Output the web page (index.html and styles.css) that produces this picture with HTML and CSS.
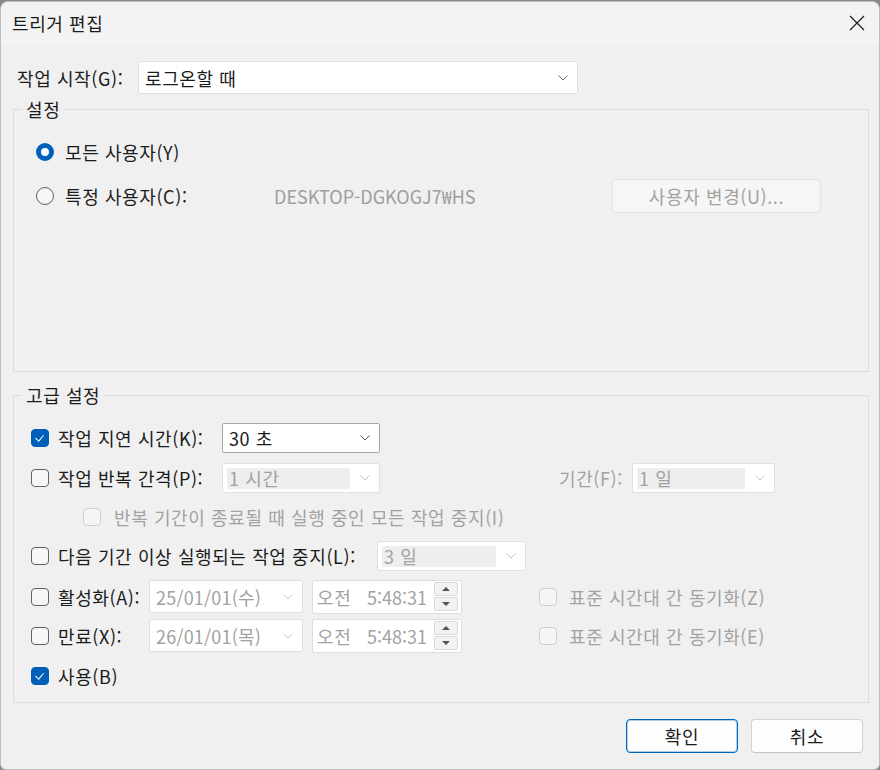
FILE: index.html
```html
<!DOCTYPE html>
<html lang="ko">
<head>
  <meta charset="UTF-8" />
  <title>트리거 편집</title>
  <link rel="stylesheet" href="styles.css">
</head>
<body>

<div class="window">
  <div class="titlebar">
    <span class="title">트리거 편집</span>
    <span class="close">
      <svg width="16" height="16" viewBox="0 0 16 16"><path d="M1 1 L15 15 M15 1 L1 15" stroke="#1b1b1b" stroke-width="1.2" fill="none"/></svg>
    </span>
  </div>

  <div class="content">
    <div class="start-row">
      <span class="start-label">작업 시작(G):</span>
      <div class="combo combo-start">
        <span class="combo-text">로그온할 때</span>
        <svg class="chev" width="10" height="6" viewBox="0 0 10 6"><path d="M0.5 0.5 L5 5 L9.5 0.5" stroke="#666" fill="none"/></svg>
      </div>
    </div>

    <fieldset class="group group-settings">
      <legend>설정</legend>
      <div class="group-body settings-body">
        <div class="radio-row row-all">
          <span class="radio checked"></span>
          <span class="radio-label">모든 사용자(Y)</span>
        </div>
        <div class="radio-row row-user">
          <span class="radio"></span>
          <span class="radio-label user-label">특정 사용자(C):</span>
          <span class="user-name">DESKTOP-DGKOGJ7₩HS</span>
          <span class="btn btn-disabled btn-user">사용자 변경(U)...</span>
        </div>
      </div>
    </fieldset>

    <fieldset class="group group-advanced">
      <legend>고급 설정</legend>
      <div class="group-body advanced-body">
        <div class="row row-delay">
          <span class="check checked"></span>
          <span class="lbl lbl-mid">작업 지연 시간(K):</span>
          <div class="combo combo-active combo-mid">
            <span class="combo-text">30 초</span>
            <svg class="chev" width="10" height="6" viewBox="0 0 10 6"><path d="M0.5 0.5 L5 5 L9.5 0.5" stroke="#555" fill="none"/></svg>
          </div>
        </div>

        <div class="row row-repeat">
          <span class="check"></span>
          <span class="lbl lbl-mid">작업 반복 간격(P):</span>
          <div class="combo combo-off combo-mid">
            <span class="combo-sel">1 시간</span>
            <svg class="chev" width="10" height="6" viewBox="0 0 10 6"><path d="M0.5 0.5 L5 5 L9.5 0.5" stroke="#c4c4c4" fill="none"/></svg>
          </div>
          <span class="lbl lbl-off lbl-period">기간(F):</span>
          <div class="combo combo-off combo-period">
            <span class="combo-sel">1 일</span>
            <svg class="chev" width="10" height="6" viewBox="0 0 10 6"><path d="M0.5 0.5 L5 5 L9.5 0.5" stroke="#c4c4c4" fill="none"/></svg>
          </div>
        </div>

        <div class="row row-stop-all">
          <span class="check check-off"></span>
          <span class="lbl-off">반복 기간이 종료될 때 실행 중인 모든 작업 중지(I)</span>
        </div>

        <div class="row row-stop">
          <span class="check"></span>
          <span class="lbl lbl-long">다음 기간 이상 실행되는 작업 중지(L):</span>
          <div class="combo combo-off combo-stop">
            <span class="combo-sel">3 일</span>
            <svg class="chev" width="10" height="6" viewBox="0 0 10 6"><path d="M0.5 0.5 L5 5 L9.5 0.5" stroke="#c4c4c4" fill="none"/></svg>
          </div>
        </div>

        <div class="row row-date row-activate">
          <span class="check"></span>
          <span class="lbl lbl-short">활성화(A):</span>
          <div class="combo combo-date">
            <span class="combo-text">25/01/01(수)</span>
            <svg class="chev" width="10" height="6" viewBox="0 0 10 6"><path d="M0.5 0.5 L5 5 L9.5 0.5" stroke="#c4c4c4" fill="none"/></svg>
          </div>
          <div class="timebox">
            <span class="time-ampm">오전</span>
            <span class="time-value">5:48:31</span>
            <span class="spin">
              <span class="spin-btn"><span class="tri-up"></span></span>
              <span class="spin-btn"><span class="tri-down"></span></span>
            </span>
          </div>
          <span class="check check-off sync-check"></span>
          <span class="lbl-off">표준 시간대 간 동기화(Z)</span>
        </div>

        <div class="row row-date row-expire">
          <span class="check"></span>
          <span class="lbl lbl-short">만료(X):</span>
          <div class="combo combo-date">
            <span class="combo-text">26/01/01(목)</span>
            <svg class="chev" width="10" height="6" viewBox="0 0 10 6"><path d="M0.5 0.5 L5 5 L9.5 0.5" stroke="#c4c4c4" fill="none"/></svg>
          </div>
          <div class="timebox">
            <span class="time-ampm">오전</span>
            <span class="time-value">5:48:31</span>
            <span class="spin">
              <span class="spin-btn"><span class="tri-up"></span></span>
              <span class="spin-btn"><span class="tri-down"></span></span>
            </span>
          </div>
          <span class="check check-off sync-check"></span>
          <span class="lbl-off">표준 시간대 간 동기화(E)</span>
        </div>

        <div class="row row-enabled">
          <span class="check checked"></span>
          <span class="lbl">사용(B)</span>
        </div>
      </div>
    </fieldset>

    <div class="actions">
      <button class="btn btn-default">확인</button>
      <button class="btn">취소</button>
    </div>
  </div>
</div>

</body>
</html>
```

FILE: styles.css
```css
html, body {
  margin: 0;
  height: 100%;
}
body {
  font-family: "Noto Sans CJK KR", "Noto Sans", sans-serif;
  font-size: 18px;
  letter-spacing: 0.6px;
  color: #1b1b1b;
  background: #8a8a8a;
}
.window {
  box-sizing: border-box;
  margin-top: 1px;
  height: 769px;
  background: #f0f0f0;
  border: 1px solid #bdbdbd;
  border-radius: 8px 8px 6px 6px;
  overflow: hidden;
}
.titlebar {
  height: 42px;
  background: #f3f3f3;
  display: flex;
  align-items: center;
  justify-content: space-between;
  padding: 0 13px 0 11px;
}
.title {
  font-size: 18px;
  line-height: 20px;
}
.close {
  display: flex;
  width: 16px;
  height: 16px;
  margin-right: 1px;
}
.content {
  padding: 0 10px 0 12px;
}

/* top row */
.start-row {
  display: flex;
  align-items: center;
  margin-top: 17px;
  padding-left: 4px;
}
.start-label {
  width: 121px;
}
.combo {
  box-sizing: border-box;
  display: flex;
  align-items: center;
  justify-content: space-between;
  background: #fff;
  border: 1px solid #e0e0e0;
  border-radius: 2px;
  padding: 0 9px 0 6px;
}
.combo-start {
  width: 440px;
  height: 33px;
}
.combo-text {
  line-height: 20px;
}
.chev {
  flex: none;
}

/* group boxes */
.group {
  box-sizing: border-box;
  margin: 0;
  padding: 0;
  border: 1px solid #dcdcdc;
  min-width: 0;
}
.group legend {
  margin-left: 8px;
  padding: 0 4px;
  line-height: 20px;
}
.group-settings {
  margin-top: 5px;
  height: 273px;
}
.group-advanced {
  margin-top: 13px;
  height: 318px;
}
.settings-body {
  padding: 15px 0 0 22px;
}
.radio-row {
  display: flex;
  align-items: center;
}
.row-all {
  height: 36px;
}
.row-user {
  height: 38px;
  margin-top: 7px;
}
.radio {
  box-sizing: border-box;
  flex: none;
  width: 18px;
  height: 18px;
  border-radius: 50%;
  border: 1px solid #5f5f5f;
  background: #f6f6f6;
  margin-right: 11px;
}
.radio.checked {
  border: 5px solid #005fb8;
  background: #fff;
}
.user-label {
  width: 209px;
}
.user-name {
  width: 338px;
  color: #9e9e9e;
  letter-spacing: 0;
}
.btn {
  box-sizing: border-box;
  display: flex;
  align-items: center;
  justify-content: center;
  font: inherit;
  letter-spacing: 0.6px;
  color: #1b1b1b;
  background: #fdfdfd;
  border: 1px solid #d3d3d3;
  border-bottom-color: #c2c2c2;
  border-radius: 4px;
  width: 112px;
  height: 34px;
  padding: 0;
}
.btn-disabled {
  color: #a2a2a2;
  background: #f6f6f6;
  border-color: #e3e3e3;
}
.btn-user {
  width: 209px;
}

/* advanced rows */
.advanced-body {
  padding: 13px 0 0 17px;
}
.row {
  display: flex;
  align-items: center;
  height: 40px;
}
.row-stop-all {
  height: 38px;
}
.row-date {
  height: 39px;
}
.row-activate {
  margin-top: 1px;
}
.row-enabled {
  height: 42px;
}
.check {
  box-sizing: border-box;
  flex: none;
  width: 18px;
  height: 18px;
  border: 1px solid #626262;
  border-radius: 4px;
  background: #f7f7f7;
  margin-right: 9px;
  position: relative;
}
.check.checked {
  background: #005fb8;
  border-color: #005fb8;
}
.check.checked::after {
  content: "";
  position: absolute;
  left: 5px;
  top: 3px;
  width: 4px;
  height: 7px;
  border: solid #fff;
  border-width: 0 1.5px 1.5px 0;
  transform: rotate(40deg);
}
.check-off {
  border-color: #cfcfcf;
  background: #f5f5f5;
}
.lbl {
  line-height: 20px;
}
.lbl-mid {
  width: 164px;
}
.lbl-long {
  width: 319px;
}
.lbl-short {
  width: 91px;
}
.lbl-off {
  color: #a2a2a2;
  line-height: 20px;
}
.lbl-period {
  margin-left: 179px;
  width: 73px;
}
.row-stop-all .check {
  margin-left: 52px;
  margin-right: 13px;
}
.combo-active {
  border-color: #a6a6a6;
}
.combo-mid {
  width: 158px;
  height: 30px;
}
.combo-period {
  width: 143px;
  height: 30px;
}
.combo-stop {
  width: 149px;
  height: 30px;
}
.combo-off {
  padding-left: 4px;
}
.combo-sel {
  flex: 1;
  margin-right: 10px;
  background: #eeeeee;
  color: #a2a2a2;
  line-height: 21px;
  padding-left: 2px;
}
.combo-date {
  width: 154px;
  height: 33px;
  color: #a2a2a2;
  border-color: #dedede;
  letter-spacing: 0.2px;
}
.timebox {
  box-sizing: border-box;
  display: flex;
  align-items: center;
  width: 150px;
  height: 34px;
  margin-left: 9px;
  background: #fff;
  border: 1px solid #dedede;
  border-radius: 2px;
  padding: 0 3px 0 4px;
  color: #a2a2a2;
}
.time-ampm {
  width: 50px;
  line-height: 20px;
}
.time-value {
  flex: 1;
  line-height: 20px;
  letter-spacing: 0;
}
.spin {
  display: flex;
  flex-direction: column;
  gap: 1px;
}
.spin-btn {
  box-sizing: border-box;
  display: flex;
  align-items: center;
  justify-content: center;
  width: 24px;
  height: 14px;
  background: #f2f2f2;
  border: 1px solid #dadada;
  border-radius: 2px;
}
.tri-up, .tri-down {
  width: 0;
  height: 0;
  border-left: 4px solid transparent;
  border-right: 4px solid transparent;
}
.tri-up {
  border-bottom: 4px solid #555;
}
.tri-down {
  border-top: 4px solid #555;
}
.sync-check {
  margin-left: 77px;
  margin-right: 12px;
}

/* bottom buttons */
.actions {
  display: flex;
  justify-content: flex-end;
  gap: 13px;
  margin-top: 16px;
  padding-right: 6px;
}
.btn-default {
  border: 1px solid #0067c0;
  box-shadow: inset 0 0 0 1px rgba(0, 103, 192, 0.3);
}
```
